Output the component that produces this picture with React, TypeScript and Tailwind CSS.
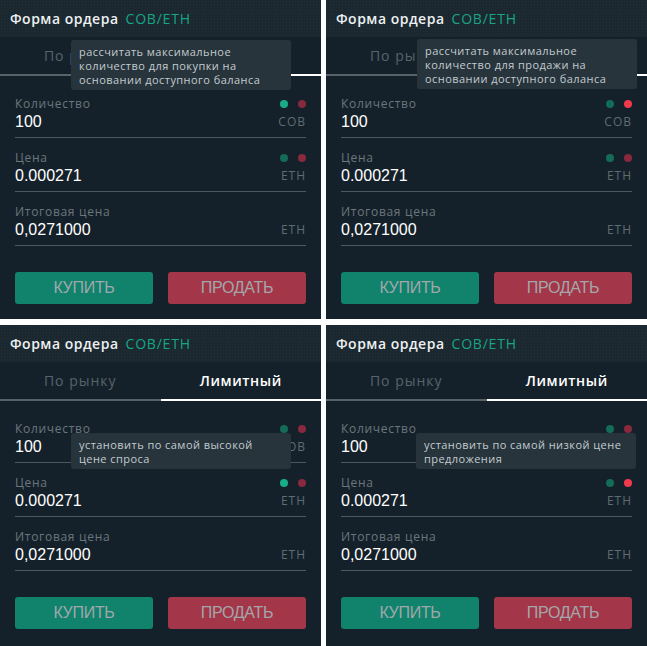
import React from 'react';

type DotState = { green: boolean; red: boolean };

type PanelProps = {
  tip: string[];
  tipClass: string;
  qty: DotState;
  price: DotState;
};

const Dots = ({ green, red }: DotState) => (
  <div className="flex items-center gap-[10px]">
    <span className={`block w-[8px] h-[8px] rounded-full ${green ? 'bg-[#17ad89]' : 'bg-[#136b58]'}`} />
    <span className={`block w-[8px] h-[8px] rounded-full ${red ? 'bg-[#f23a4f]' : 'bg-[#88293d]'}`} />
  </div>
);

const Field = ({
  label,
  value,
  unit,
  dots,
  first,
}: {
  label: string;
  value: string;
  unit: string;
  dots?: DotState;
  first?: boolean;
}) => (
  <div className={`border-b border-[#4b585e] pb-[5px] ${first ? '' : 'mt-[13px]'}`}>
    <div className="flex h-[14px] items-center justify-between">
      <span className="text-[12px] leading-[14px] tracking-[0.7px] text-[#6b777d]">{label}</span>
      {dots && <Dots {...dots} />}
    </div>
    <div className="mt-px flex h-[20px] items-center justify-between">
      <span className="font-['Liberation_Sans',Arial,sans-serif] text-[16px] leading-[20px] text-white">{value}</span>
      <span className="text-[12px] leading-[20px] tracking-[1px] text-[#5f6c72]">{unit}</span>
    </div>
  </div>
);

const Panel = ({ tip, tipClass, qty, price }: PanelProps) => (
  <div className="relative h-full overflow-hidden bg-[#15212a] font-['Open_Sans',sans-serif]">
    {/* header */}
    <div className="flex h-[37px] items-center bg-[#1b2830] bg-[radial-gradient(#223039_1px,transparent_1px)] bg-[length:3px_3px] px-[10px]">
      <span className="text-[14px] font-semibold tracking-[0.5px] text-[#eef1f2]">Форма ордера</span>
      <span className="ml-[7px] text-[14px] tracking-[0.8px] text-[#17a585]">COB/ETH</span>
    </div>

    {/* tabs */}
    <div className="grid grid-cols-2">
      <div className="flex h-[39px] items-center justify-center border-b-2 border-[#56646a]">
        <span className="text-[14px] tracking-[1px] text-[#56646b]">По рынку</span>
      </div>
      <div className="flex h-[39px] items-center justify-center border-b-2 border-white">
        <span className="text-[14px] font-semibold tracking-[0.6px] text-white">Лимитный</span>
      </div>
    </div>

    {/* fields */}
    <div className="px-[15px] pt-[21px]">
      <Field first label="Количество" value="100" unit="COB" dots={qty} />
      <Field label="Цена" value="0.000271" unit="ETH" dots={price} />
      <Field label="Итоговая цена" value="0,0271000" unit="ETH" />

      <div className="mt-[26px] flex gap-[15px]">
        <button className="flex h-[32px] flex-1 items-center justify-center rounded-[3px] bg-[#11826b] font-['Liberation_Sans',Arial,sans-serif] text-[16px] tracking-[-0.3px] text-[#a0a8ab]">
          КУПИТЬ
        </button>
        <button className="flex h-[32px] flex-1 items-center justify-center rounded-[3px] bg-[#a33649] font-['Liberation_Sans',Arial,sans-serif] text-[16px] tracking-[-0.3px] text-[#a3a7aa]">
          ПРОДАТЬ
        </button>
      </div>
    </div>

    {/* tooltip */}
    <div className={`absolute w-[220px] rounded-[3px] bg-[#27343c] px-[8px] pt-[5px] pb-[3px] ${tipClass}`}>
      {tip.map((line) => (
        <div key={line} className="text-[11px] leading-[14px] tracking-[0.45px] whitespace-nowrap text-[#c3cbcf]">
          {line}
        </div>
      ))}
    </div>
  </div>
);

export default function App() {
  return (
    <div className="grid h-[646px] w-[647px] grid-cols-[321px_321px] grid-rows-[319px_321px] gap-x-[5px] gap-y-[6px] bg-white">
      <Panel
        tip={['рассчитать максимальное', 'количество для покупки на', 'основании доступного баланса']}
        tipClass="left-[71px] top-[40px]"
        qty={{ green: true, red: false }}
        price={{ green: false, red: false }}
      />
      <Panel
        tip={['рассчитать максимальное', 'количество для продажи на', 'основании доступного баланса']}
        tipClass="left-[91px] top-[39px]"
        qty={{ green: false, red: true }}
        price={{ green: false, red: false }}
      />
      <Panel
        tip={['установить по самой высокой', 'цене спроса']}
        tipClass="left-[71px] top-[108px]"
        qty={{ green: false, red: false }}
        price={{ green: true, red: false }}
      />
      <Panel
        tip={['установить по самой низкой цене', 'предложения']}
        tipClass="left-[90px] top-[108px]"
        qty={{ green: false, red: false }}
        price={{ green: false, red: true }}
      />
    </div>
  );
}
